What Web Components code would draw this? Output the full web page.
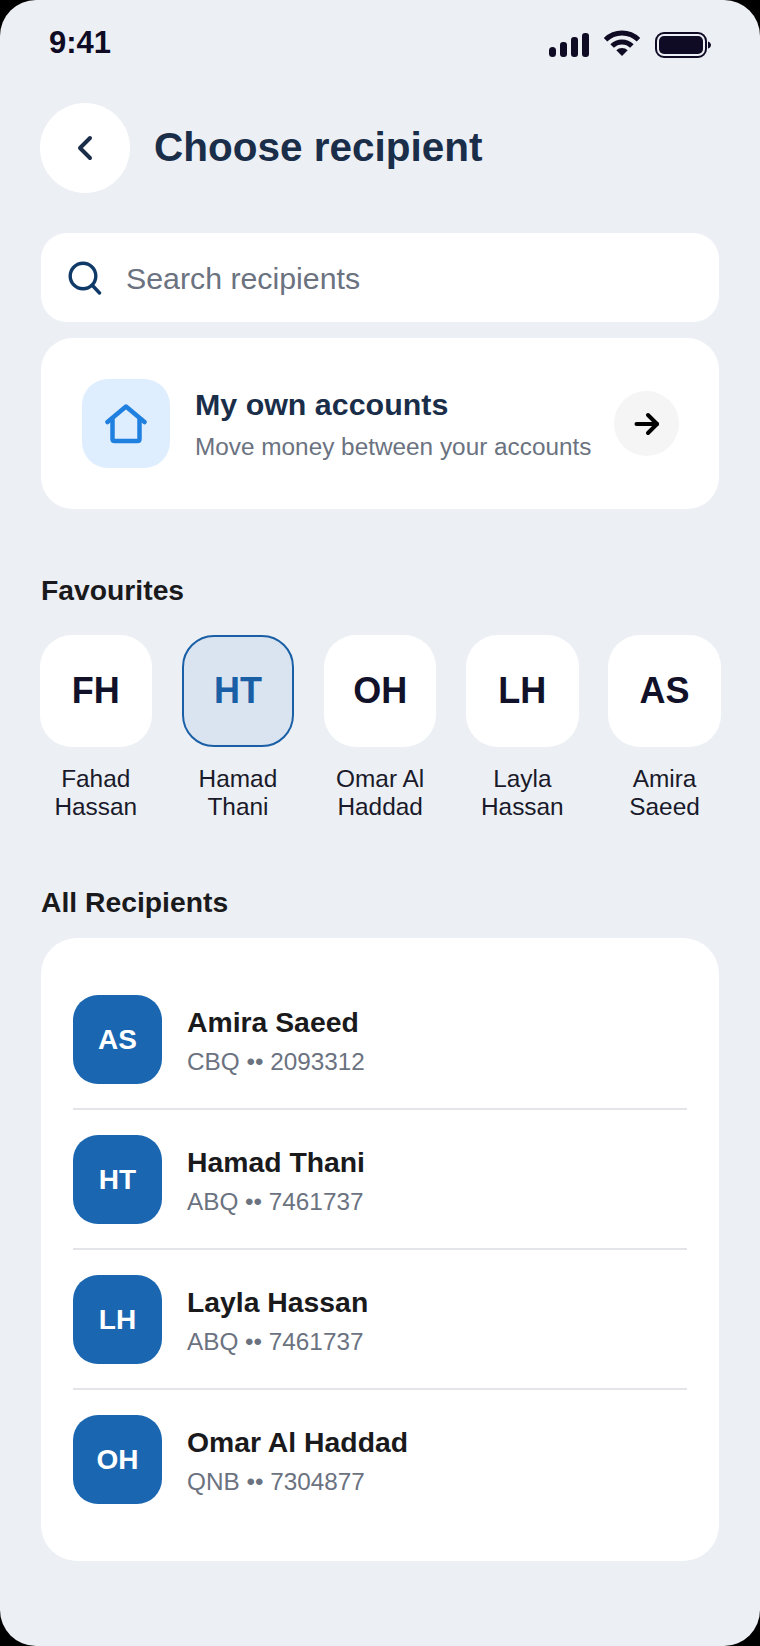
<!DOCTYPE html>
<html>
<head>
<meta charset="utf-8">
<title>Choose recipient</title>
<style>
    html, body { margin: 0; padding: 0; background: #000; }
    body { font-family: "Liberation Sans", Arial, sans-serif; width: 760px; height: 1646px; overflow: hidden; }
</style>
</head>
<body>
<phone-screen>
    <status-bar time="9:41"></status-bar>
    <screen-header>Choose recipient</screen-header>
    <search-box>Search recipients</search-box>
    <own-accounts title="My own accounts" sub="Move money between your accounts"></own-accounts>

    <section-label top="65" bottom="29">Favourites</section-label>
    <fav-row>
        <fav-tile initials="FH">Fahad Hassan</fav-tile>
        <fav-tile initials="HT" selected>Hamad Thani</fav-tile>
        <fav-tile initials="OH">Omar Al Haddad</fav-tile>
        <fav-tile initials="LH">Layla Hassan</fav-tile>
        <fav-tile initials="AS">Amira Saeed</fav-tile>
    </fav-row>

    <section-label top="65" bottom="20">All Recipients</section-label>
    <recipient-list>
        <recipient-row initials="AS" name="Amira Saeed" account="CBQ •• 2093312"></recipient-row>
        <recipient-row initials="HT" name="Hamad Thani" account="ABQ •• 7461737"></recipient-row>
        <recipient-row initials="LH" name="Layla Hassan" account="ABQ •• 7461737"></recipient-row>
        <recipient-row initials="OH" name="Omar Al Haddad" account="QNB •• 7304877"></recipient-row>
    </recipient-list>
</phone-screen>

<script>
class PhoneScreen extends HTMLElement {
    constructor() {
        super();
        this.attachShadow({mode: 'open'});
        this.shadowRoot.innerHTML = `
            <style>
                :host {
                    display: block;
                    box-sizing: border-box;
                    width: 760px;
                    height: 1646px;
                    padding: 0 41px;
                    background: #ecf0f5;
                    border-radius: 36px;
                    overflow: hidden;
                }
            </style>
            <slot></slot>
        `;
    }
}

class StatusBar extends HTMLElement {
    constructor() {
        super();
        this.attachShadow({mode: 'open'});
        this.shadowRoot.innerHTML = `
            <style>
                :host {
                    display: flex;
                    align-items: flex-start;
                    justify-content: space-between;
                    height: 103px;
                    margin: 0 8px 0 8px;
                    color: #0f0b24;
                }
                .time {
                    font-size: 31px;
                    font-weight: 700;
                    line-height: 36px;
                    margin-top: 25px;
                }
                .icons {
                    display: flex;
                    gap: 15px;
                    margin-top: 30px;
                }
                svg { display: block; fill: #0f0b24; }
            </style>
            <span class="time">${this.getAttribute('time')}</span>
            <div class="icons">
                <svg width="40" height="28" viewBox="0 0 40 28">
                    <rect x="0" y="17" width="7" height="10" rx="3.5"/>
                    <rect x="11" y="12" width="7" height="15" rx="3"/>
                    <rect x="22" y="7" width="7" height="20" rx="3"/>
                    <rect x="33" y="3" width="7" height="24" rx="3"/>
                </svg>
                <svg width="36" height="26" viewBox="0 0 36 26">
                    <path d="M1.500 9.700A23.500 23.500 0 0 1 34.500 9.700" fill="none" stroke="#0f0b24" stroke-width="5"/>
                    <path d="M8.100 16.100A14 14 0 0 1 27.900 16.100" fill="none" stroke="#0f0b24" stroke-width="5"/>
                    <path d="M18 26L12.300 20.300A8 8 0 0 1 23.700 20.300Z"/>
                </svg>
                <svg width="56" height="27" viewBox="0 0 56 27" style="margin-top:2px">
                    <rect x="1" y="1" width="50" height="24" rx="8" fill="none" stroke="#0f0b24" stroke-width="2"/>
                    <rect x="4" y="4" width="44" height="18" rx="5"/>
                    <path d="M53 9.500c1.800 0.500 3 2 3 3.500s-1.200 3-3 3.500z"/>
                </svg>
            </div>
        `;
    }
}

class ScreenHeader extends HTMLElement {
    constructor() {
        super();
        this.attachShadow({mode: 'open'});
        this.shadowRoot.innerHTML = `
            <style>
                :host {
                    display: flex;
                    align-items: center;
                    gap: 24px;
                    height: 90px;
                    margin-left: -1px;
                }
                .back {
                    display: flex;
                    align-items: center;
                    justify-content: center;
                    width: 90px;
                    height: 90px;
                    border-radius: 50%;
                    background: #fff;
                }
                h1 {
                    margin: 0 0 1px;
                    font-size: 40.500px;
                    font-weight: 700;
                    color: #1a2e4a;
                }
            </style>
            <div class="back">
                <svg width="20" height="28" viewBox="0 0 20 28" fill="none" stroke="#1a2e4a" stroke-width="4" stroke-linecap="round" stroke-linejoin="round">
                    <path d="M15 4L5 14l10 10"/>
                </svg>
            </div>
            <h1><slot></slot></h1>
        `;
    }
}

class SearchBox extends HTMLElement {
    constructor() {
        super();
        this.attachShadow({mode: 'open'});
        this.shadowRoot.innerHTML = `
            <style>
                :host {
                    display: flex;
                    align-items: center;
                    gap: 24px;
                    box-sizing: border-box;
                    height: 89px;
                    margin-top: 40px;
                    padding-left: 27px;
                    background: #fff;
                    border-radius: 26px;
                    font-size: 30.300px;
                    color: #6b7280;
                }
                span { padding-top: 2px; }
            </style>
            <svg width="34" height="34" viewBox="0 0 34 34" fill="none" stroke="#0f3a68" stroke-width="3.400" stroke-linecap="round">
                <circle cx="15" cy="15" r="12.800"/>
                <path d="M24.500 24.500L31.500 32"/>
            </svg>
            <span><slot></slot></span>
        `;
    }
}

class OwnAccounts extends HTMLElement {
    constructor() {
        super();
        this.attachShadow({mode: 'open'});
        this.shadowRoot.innerHTML = `
            <style>
                :host {
                    display: flex;
                    align-items: center;
                    box-sizing: border-box;
                    height: 171px;
                    margin-top: 16px;
                    padding: 0 40px 0 41px;
                    background: #fff;
                    border-radius: 32px;
                }
                .icon {
                    display: flex;
                    align-items: center;
                    justify-content: center;
                    flex: none;
                    width: 88px;
                    height: 89px;
                    background: #deeefe;
                    border-radius: 26px;
                }
                .text { flex: 1; margin-left: 25px; padding-top: 1px; }
                .title {
                    font-size: 30.400px;
                    font-weight: 700;
                    line-height: 34px;
                    color: #1a2e4a;
                }
                .sub {
                    margin-top: 11px;
                    font-size: 24.350px;
                    line-height: 30px;
                    color: #6b7280;
                }
                .go {
                    display: flex;
                    align-items: center;
                    justify-content: center;
                    flex: none;
                    width: 65px;
                    height: 65px;
                    border-radius: 50%;
                    background: #f5f5f6;
                }
            </style>
            <div class="icon">
                <svg width="42" height="40" viewBox="0 0 42 40" fill="none" stroke="#2080e0" stroke-width="4.500" stroke-linecap="round" stroke-linejoin="round">
                    <path d="M2.500 18L21 2.500 39.500 18"/>
                    <path d="M7.500 15V35Q7.500 37 9.500 37H32.500Q34.500 37 34.500 35V15"/>
                </svg>
            </div>
            <div class="text">
                <div class="title">${this.getAttribute('title')}</div>
                <div class="sub">${this.getAttribute('sub')}</div>
            </div>
            <div class="go">
                <svg width="26" height="24" viewBox="0 0 26 24" fill="none" stroke="#000" stroke-width="4" stroke-linecap="round" stroke-linejoin="round">
                    <path d="M2.500 12H23"/>
                    <path d="M14 3L23 12 14 21"/>
                </svg>
            </div>
        `;
    }
}

class SectionLabel extends HTMLElement {
    constructor() {
        super();
        this.attachShadow({mode: 'open'});
        this.shadowRoot.innerHTML = `
            <style>
                :host {
                    display: block;
                    margin-top: ${this.getAttribute('top')}px;
                    margin-bottom: ${this.getAttribute('bottom')}px;
                    font-size: 28.300px;
                    font-weight: 700;
                    line-height: 32px;
                    color: #1a1a1c;
                }
            </style>
            <slot></slot>
        `;
    }
}

class FavRow extends HTMLElement {
    constructor() {
        super();
        this.attachShadow({mode: 'open'});
        this.shadowRoot.innerHTML = `
            <style>
                :host {
                    display: grid;
                    grid-template-columns: repeat(5, 112.500px);
                    column-gap: 29.700px;
                    margin-left: -1.500px;
                }
            </style>
            <slot></slot>
        `;
    }
}

class FavTile extends HTMLElement {
    constructor() {
        super();
        this.attachShadow({mode: 'open'});
        this.shadowRoot.innerHTML = `
            <style>
                :host {
                    display: block;
                    text-align: center;
                    font-size: 24.400px;
                    line-height: 28px;
                    color: #1a1a2a;
                }
                .tile {
                    display: flex;
                    align-items: center;
                    justify-content: center;
                    box-sizing: border-box;
                    height: 112px;
                    margin-bottom: 18px;
                    background: #fff;
                    border-radius: 32px;
                    font-size: 36px;
                    font-weight: 700;
                    color: #11112a;
                }
                :host([selected]) .tile {
                    background: #d9e4f0;
                    border: 2px solid #1a5fa5;
                    color: #1a5fa5;
                }
            </style>
            <div class="tile">${this.getAttribute('initials')}</div>
            <slot></slot>
        `;
    }
}

class RecipientList extends HTMLElement {
    constructor() {
        super();
        this.attachShadow({mode: 'open'});
        this.shadowRoot.innerHTML = `
            <style>
                :host {
                    display: block;
                    box-sizing: border-box;
                    height: 623px;
                    padding: 32px 32px 0;
                    background: #fff;
                    border-radius: 36px;
                }
                ::slotted(recipient-row:not(:last-child)) {
                    border-bottom: 2px solid #e3e5e8;
                }
                ::slotted(recipient-row:last-child) {
                    height: 138px;
                }
            </style>
            <slot></slot>
        `;
    }
}

class RecipientRow extends HTMLElement {
    constructor() {
        super();
        this.attachShadow({mode: 'open'});
        this.shadowRoot.innerHTML = `
            <style>
                :host {
                    display: flex;
                    align-items: center;
                    gap: 25px;
                    box-sizing: border-box;
                    height: 140px;
                }
                .avatar {
                    display: flex;
                    align-items: center;
                    justify-content: center;
                    flex: none;
                    box-sizing: border-box;
                    width: 89px;
                    height: 89px;
                    padding-top: 2px;
                    background: #1a66b0;
                    border-radius: 25px;
                    font-size: 28px;
                    font-weight: 700;
                    color: #fff;
                }
                .text { padding-top: 4px; }
                .name {
                    font-size: 28.350px;
                    font-weight: 700;
                    line-height: 32px;
                    color: #1a1a1c;
                }
                .account {
                    margin-top: 9px;
                    font-size: 24.300px;
                    line-height: 30px;
                    color: #6b7280;
                }
            </style>
            <div class="avatar">${this.getAttribute('initials')}</div>
            <div class="text">
                <div class="name">${this.getAttribute('name')}</div>
                <div class="account">${this.getAttribute('account')}</div>
            </div>
        `;
    }
}

customElements.define('phone-screen', PhoneScreen);
customElements.define('status-bar', StatusBar);
customElements.define('screen-header', ScreenHeader);
customElements.define('search-box', SearchBox);
customElements.define('own-accounts', OwnAccounts);
customElements.define('section-label', SectionLabel);
customElements.define('fav-row', FavRow);
customElements.define('fav-tile', FavTile);
customElements.define('recipient-list', RecipientList);
customElements.define('recipient-row', RecipientRow);
</script>
</body>
</html>
